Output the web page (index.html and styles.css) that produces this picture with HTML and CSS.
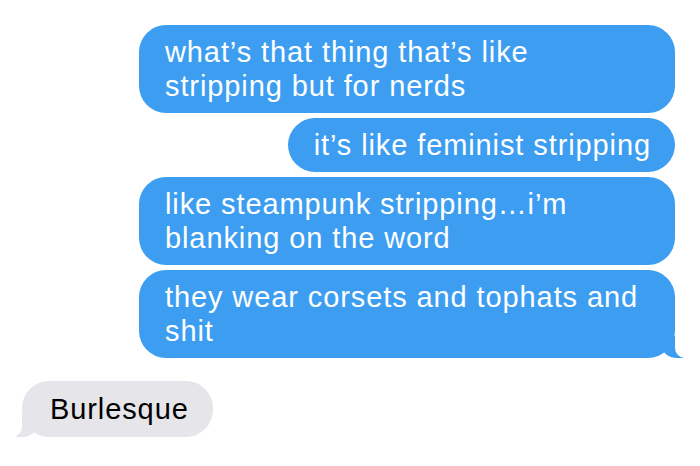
FILE: index.html
```html
<!DOCTYPE html>
<html lang="en">
<head>
    <meta charset="UTF-8">
    <meta name="viewport" content="width=device-width, initial-scale=1.0">
    <title>Messages</title>
    <link rel="stylesheet" href="styles.css">
</head>
<body>
    <div class="chat">
        <div class="group sent">
            <div class="bubble">what’s that thing that’s like stripping but for nerds</div>
            <div class="bubble">it’s like feminist stripping</div>
            <div class="bubble">like steampunk stripping…i’m blanking on the word</div>
            <div class="bubble tail">they wear corsets and tophats and shit</div>
        </div>

        <div class="group received">
            <div class="bubble tail">Burlesque</div>
        </div>
    </div>
</body>
</html>
```

FILE: styles.css
```css
/* Reset */
* {
    margin: 0;
    padding: 0;
    box-sizing: border-box;
}

body {
    background: #fff;
    font-family: 'Liberation Sans', Arial, sans-serif;
    width: 700px;
    height: 466px;
    overflow: hidden;
}

.chat {
    display: flex;
    flex-direction: column;
    padding: 25px 25px 0 22px;
}

.group {
    display: flex;
    flex-direction: column;
    gap: 5px;
}

.sent {
    align-items: flex-end;
}

.received {
    align-items: flex-start;
    margin-top: 23px;
}

.bubble {
    position: relative;
    max-width: 536px;
    padding: 10px 24px 10px 26px;
    border-radius: 27px;
    font-size: 29px;
    line-height: 34px;
    letter-spacing: 0.9px;
}

.sent .bubble {
    background: #3d9ef1;
    color: #fff;
}

.received .bubble {
    background: #e5e5ea;
    color: #000;
    padding: 11px 24px 11px 28px;
}

/* Bubble tails */
.tail::before,
.tail::after {
    content: "";
    position: absolute;
    bottom: 0;
    height: 22px;
}

.sent .tail::before {
    right: -8px;
    width: 22px;
    background: #3d9ef1;
    border-bottom-left-radius: 16px 14px;
}

.sent .tail::after {
    right: -12px;
    width: 12px;
    background: #fff;
    border-bottom-left-radius: 10px;
}

.received .tail::before {
    left: -6px;
    width: 22px;
    background: #e5e5ea;
    border-bottom-right-radius: 16px 14px;
}

.received .tail::after {
    left: -12px;
    width: 12px;
    background: #fff;
    border-bottom-right-radius: 10px;
}
```
